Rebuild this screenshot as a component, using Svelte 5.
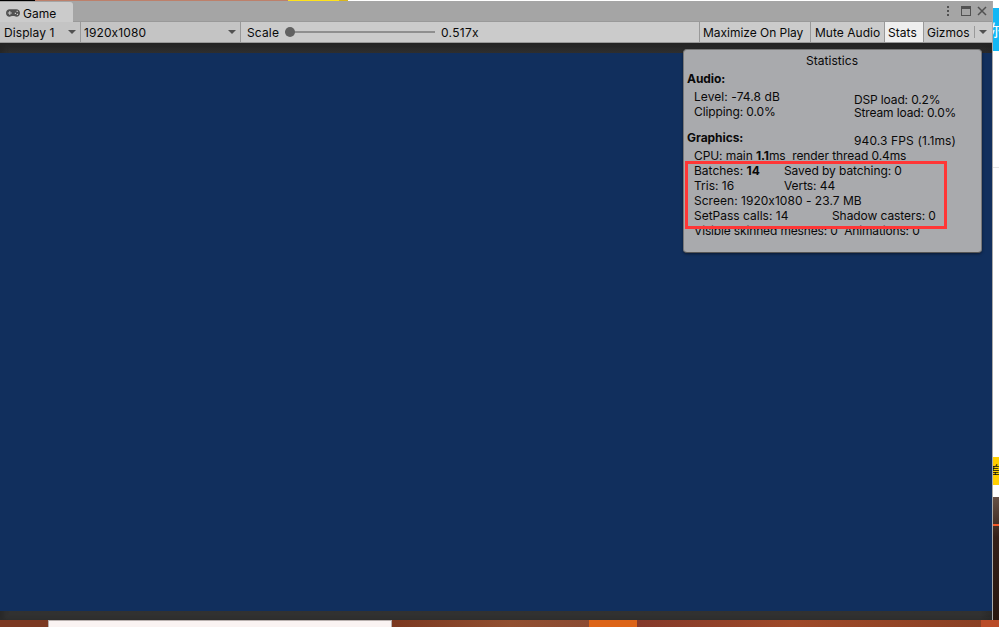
<script>
  const buttons = [
    { label: 'Maximize On Play', w: 111, tracking: -0.03 },
    { label: 'Mute Audio', w: 74, tracking: 0.03 },
    { label: 'Stats', w: 39, on: true, tracking: 0.05 },
  ];
</script>

<div class="screen">
  <div class="top"><i class="black"></i><i class="skin"></i><i class="yellow"></i><i class="gold"></i></div>
  <div class="middle">
    <main class="window">
      <header class="tabs">
        <div class="tab">
          <svg width="14" height="8" viewBox="0 0 14 8"><path fill="#515151" fill-rule="evenodd" d="M3.700.3C1.600.3 0 1.900 0 4s1.500 3.700 3.500 3.700c1.200 0 1.800-.7 3.500-.7s2.300.7 3.500.7C12.500 7.700 14 6.100 14 4S12.400.3 10.300.3ZM3.300 2h1v1.500h1.500v1H4.300V6h-1V4.500H1.800v-1h1.500ZM10.600 1.800h1.200V3h-1.200ZM8.800 3.800H10V5H8.800ZM10.800 4.800H12V6h-1.200Z"/></svg>
          <span>Game</span>
        </div>
        <div class="controls">
          <svg width="44" height="14" viewBox="0 0 44 14"><g fill="#515151"><path d="M3 2h2v2H3zM3 6h2v2H3zM3 10h2v2H3z"/><path fill-rule="evenodd" d="M17 2h10v10H17zM18 5v6h8V5z"/></g><path d="m34 3 8 8m0-8-8 8" stroke="#515151" stroke-width="1.500" fill="none"/></svg>
        </div>
      </header>
      <nav class="toolbar">
        <div class="drop display"><span>Display 1</span><b class="arrow"></b></div>
        <div class="drop resolution"><span>1920x1080</span><b class="arrow"></b></div>
        <div class="scale"><span>Scale</span><div class="track"><i></i></div><span class="value">0.517x</span></div>
        {#each buttons as b}
          <div class="button" class:on={b.on} style:width="{b.w}px" style:letter-spacing="{b.tracking}px">{b.label}</div>
        {/each}
        <div class="gizmos"><span>Gizmos</span><i></i><b class="arrow"></b></div>
      </nav>
      <section class="view"><div class="game"></div></section>
    </main>
    <aside class="behind">
      <div class="cyan"><span>你</span></div>
      <div class="rule"></div>
      <div class="promo"><span>差</span></div>
      <div class="photo"><i></i></div>
    </aside>
  </div>
  <footer class="bottom"><i class="rust"></i><i class="paper"></i><i class="copper"></i><i class="orange"></i><i class="brown"></i><i class="red"></i></footer>

  <div class="stats">
    <div class="title">Statistics</div>
    <div class="heading">Audio:</div>
    <div class="pair audio">
      <div><p class="level">Level: -74.8 dB</p><p class="clipping">Clipping: 0.0%</p></div>
      <div class="load"><p>DSP load: 0.2%</p><p>Stream load: 0.0%</p></div>
    </div>
    <div class="pair graphics"><div class="heading">Graphics:</div><div class="fps">940.3 FPS (1.1ms)</div></div>
    <div class="lines">
      <p class="cpu">CPU: main <strong>1.1</strong>ms&nbsp; render thread 0.4ms</p>
      <p><span class="c1">Batches: <strong>14</strong></span><span class="tight">Saved by batching: 0</span></p>
      <p><span class="c1">Tris: 16</span><span class="tight">Verts: 44</span></p>
      <p class="size">Screen: 1920x1080 - 23.7 MB</p>
      <p><span class="c2">SetPass calls: 14</span><span class="tight">Shadow casters: 0</span></p>
      <p class="meshes">Visible skinned meshes: 0&nbsp; Animations: 0</p>
    </div>
  </div>
  <div class="highlight"></div>
</div>

<style>
  :global(body) { margin: 0; overflow: hidden; }
  * { box-sizing: border-box; }
  .screen { position: relative; display: flex; flex-direction: column; width: 999px; height: 627px; overflow: hidden; font: 12px/15px Inter, sans-serif; font-feature-settings: "calt" 0; color: #090909; white-space: nowrap; background: #fff; }
  i, b.arrow { display: block; flex: none; }
  p { margin: 0; }
  .top { display: flex; height: 1px; }
  .black { width: 35px; background: #000; }
  .skin { width: 253px; background: #bd806b; }
  .yellow { width: 51px; background: #ffe21b; }
  .gold { width: 9px; background: #d9b61d; }
  .middle { display: flex; height: 619px; }
  .window { display: flex; flex-direction: column; width: 992px; }
  .tabs { display: flex; justify-content: space-between; height: 21px; background: #a5a5a5; border-bottom: 1px solid #999; }
  .tab { display: flex; align-items: center; width: 73px; height: 20px; margin-top: 1px; padding-left: 6px; gap: 3px; background: #cbcbcb; border-radius: 0 3px 0 0; }
  .tab span { margin-top: 3px; }
  .tab svg { margin-top: 2px; }
  .controls { width: 48px; padding-top: 3px; }
  .controls svg { display: block; }
  .toolbar { display: flex; height: 21px; background: #cbcbcb; border-bottom: 1px solid #999; line-height: 21px; }
  .arrow { width: 8px; height: 4px; background: #515151; clip-path: polygon(0 0, 100% 0, 50% 100%); }
  .drop { display: flex; align-items: center; justify-content: space-between; height: 20px; padding: 0 4px 0 4px; border-right: 1px solid #999; background: #c4c4c4; }
  .display { width: 81px; letter-spacing: 0.08px; }
  .resolution { width: 160px; padding-left: 3px; letter-spacing: 0.1px; }
  .scale { display: flex; flex: none; align-items: center; width: 458px; padding-left: 6px; }
  .scale > span:first-child { width: 38px; letter-spacing: 0.15px; }
  .track { width: 150px; height: 2px; background: #8f8f8f; }
  .track i { width: 10px; height: 10px; margin-top: -4px; border-radius: 50%; background: #616161; }
  .value { margin-left: 6px; letter-spacing: 0.3px; }
  .button { flex: none; height: 20px; padding-left: 3px; border-left: 1px solid #999; }
  .button:nth-child(5) { padding-left: 4px; }
  .on { background: #efefef; }
  .gizmos { display: flex; flex: none; align-items: center; width: 69px; height: 20px; padding-left: 3px; border-left: 1px solid #999; }
  .gizmos span { width: 47px; }
  .gizmos i { width: 1px; height: 12px; background: #999; margin-right: 4px; }
  .view { height: 577px; padding-top: 10px; background: linear-gradient(90deg, #2220, #2220 980px, #2228), linear-gradient(#242424, #303030 12px, #313131); box-shadow: inset 4px 0 4px #2228; }
  .game { height: 558px; background: #112f5d; }
  .behind { display: flex; flex-direction: column; width: 7px; padding-top: 7px; overflow: hidden; border-left: 1px solid #aaa; }
  .cyan { height: 43px; overflow: hidden; background: #12b7f5; color: white; font: 16px/42px "Noto Sans CJK SC", sans-serif; }
  .cyan span { margin-left: -7px; }
  .rule { height: 117px; border-bottom: 1px solid #e5e5e5; }
  .promo { height: 28px; margin-top: 289px; overflow: hidden; background: #ffcf00; color: #111; font: 12px/26px "Noto Sans CJK SC", sans-serif; }
  .promo span { margin-left: -5px; }
  .photo { height: 123px; margin-top: 12px; padding-top: 27px; background: linear-gradient(#665146, #352018 40px, #28170f); }
  .photo i { height: 2px; background: #f15a2b; }
  .bottom { display: flex; height: 7px; }
  .rust { width: 48px; background: #7c3922; }
  .paper { width: 344px; background: #faf3f2; border: solid #b8b0ae; border-width: 1px 1px 0; }
  .copper { width: 197px; background: linear-gradient(90deg, #7b3820, #914f30 60%, #8b4b33); }
  .orange { width: 48px; background: #dc6418; }
  .brown { width: 344px; background: linear-gradient(90deg, #84392a, #9e4928 45%, #8a4024); }
  .red { width: 18px; background: #b94c28; }
  .stats { position: absolute; left: 683px; top: 49px; width: 299px; height: 204px; padding-top: 3px; background: #a9aaad; border: 1px solid #777; border-bottom-color: #555; border-radius: 4px; box-shadow: 0 1px 3px #0007; }
  .title { height: 18px; padding-right: 1px; text-align: center; letter-spacing: 0.06px; }
  .heading { padding-left: 3px; font-weight: 700; letter-spacing: -0.05px; }
  .pair { display: flex; }
  .pair > div:first-child { width: 170px; }
  .audio { height: 44px; padding: 3px 0 0 10px; }
  .audio > div:first-child { width: 160px; }
  .level { letter-spacing: 0.08px; }
  .clipping { letter-spacing: -0.12px; }
  .load { padding-top: 3px; line-height: 15px; letter-spacing: -0.14px; }
  .load p + p { margin-top: -2px; }
  .graphics { height: 18px; }
  .fps { padding-top: 3px; letter-spacing: 0.12px; }
  .lines { padding-left: 10px; }
  .lines span { display: inline-block; }
  .lines .c1 { width: 90px; }
  .lines .c2 { width: 138px; }
  .cpu { letter-spacing: -0.09px; }
  .size { letter-spacing: 0.03px; }
  .tight { letter-spacing: -0.08px; }
  .meshes { letter-spacing: -0.15px; }
  .highlight { position: absolute; left: 685px; top: 161px; width: 262px; height: 68px; border: 3px solid #ff3636; }
</style>
